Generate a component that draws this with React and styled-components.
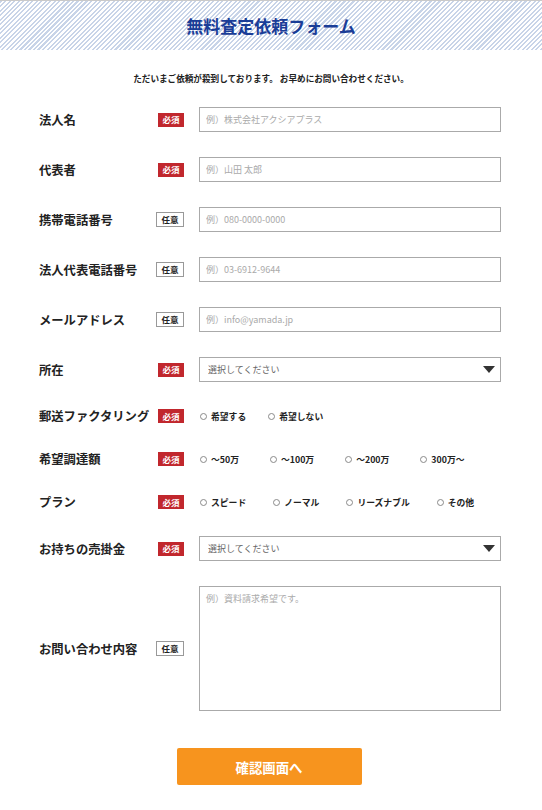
import React from 'react';
import styled, { createGlobalStyle } from 'styled-components';

const fields = [
  { label: '法人名', required: true, type: 'text', placeholder: '例）株式会社アクシアプラス' },
  { label: '代表者', required: true, type: 'text', placeholder: '例）山田 太郎' },
  { label: '携帯電話番号', required: false, type: 'text', placeholder: '例）080-0000-0000' },
  { label: '法人代表電話番号', required: false, type: 'text', placeholder: '例）03-6912-9644' },
  { label: 'メールアドレス', required: false, type: 'text', placeholder: '例）info@yamada.jp' },
  { label: '所在', required: true, type: 'select' },
  { label: '郵送ファクタリング', required: true, type: 'radio', name: 'mail', gap: 21, options: ['希望する', '希望しない'] },
  { label: '希望調達額', required: true, type: 'radio', name: 'amount', gap: 30, options: ['〜50万', '〜100万', '〜200万', '300万〜'] },
  { label: 'プラン', required: true, type: 'radio', name: 'plan', gap: 26, options: ['スピード', 'ノーマル', 'リーズナブル', 'その他'] },
  { label: 'お持ちの売掛金', required: true, type: 'select' },
  { label: 'お問い合わせ内容', required: false, type: 'textarea', placeholder: '例）資料請求希望です。' },
];

const App = function () {
  const renderField = (f) => {
    if (f.type === 'select') {
      return (
        <SelectWrap>
          <Select defaultValue="">
            <option value="">選択してください</option>
          </Select>
        </SelectWrap>
      );
    }
    if (f.type === 'radio') {
      return (
        <RadioGroup>
          {f.options.map((opt, i) => (
            <RadioLabel key={i} $gap={f.gap}>
              <Radio type="radio" name={f.name} />
              {opt}
            </RadioLabel>
          ))}
        </RadioGroup>
      );
    }
    if (f.type === 'textarea') {
      return <TextArea placeholder={f.placeholder} />;
    }
    return <Input type="text" placeholder={f.placeholder} />;
  };

  return (
    <Page>
      <GlobalStyle />
      <Header>
        <Title>無料査定依頼フォーム</Title>
      </Header>
      <Lead>ただいまご依頼が殺到しております。 お早めにお問い合わせください。</Lead>
      <Form onSubmit={(e) => e.preventDefault()}>
        <Rows>
          {fields.map((f, i) => (
            <Row key={i}>
              <LabelCell>
                <Label>{f.label}</Label>
                {f.required ? <Required>必須</Required> : <Optional>任意</Optional>}
              </LabelCell>
              <FieldCell>{renderField(f)}</FieldCell>
            </Row>
          ))}
        </Rows>
        <Submit type="submit">確認画面へ</Submit>
      </Form>
    </Page>
  );
};

export default App;

const GlobalStyle = createGlobalStyle`
  * { box-sizing: border-box; }
  body {
    margin: 0;
    background: #fff;
    color: #222;
    font-family: "Noto Sans CJK JP", "Noto Sans", sans-serif;
  }
`;

const Page = styled.div`
  width: 542px;
  min-height: 810px;
  background: #fff;
`;

const Header = styled.div`
  height: 50px;
  border-top: 1px solid #c9c9c9;
  background: repeating-linear-gradient(135deg, #c8d4e8 0px, #c8d4e8 1.5px, #ffffff 1.5px, #ffffff 3.2px);
  display: flex;
  align-items: center;
  justify-content: center;
`;

const Title = styled.h1`
  margin: 0;
  color: #1a3d97;
  font-size: 17px;
  font-weight: 700;
  line-height: 1;
`;

const Lead = styled.p`
  margin: 22px 0 0;
  text-align: center;
  font-size: 8.6px;
  font-weight: 700;
  line-height: 12px;
  color: #222;
`;

const Form = styled.form`
  padding: 23px 41px 0 39px;
  display: flex;
  flex-direction: column;
  align-items: center;
`;

const Rows = styled.div`
  width: 100%;
  display: flex;
  flex-direction: column;
  gap: 25px;
`;

const Row = styled.div`
  display: flex;
  align-items: center;
`;

const LabelCell = styled.div`
  width: 145px;
  flex: none;
  display: flex;
  align-items: center;
  justify-content: space-between;
`;

const Label = styled.span`
  font-size: 12.3px;
  font-weight: 700;
  color: #222;
  white-space: nowrap;
`;

const Required = styled.span`
  width: 26px;
  height: 14px;
  background: #c1272d;
  color: #fff;
  font-size: 8.5px;
  font-weight: 700;
  display: flex;
  align-items: center;
  justify-content: center;
  line-height: 1;
`;

const Optional = styled.span`
  width: 28px;
  height: 15px;
  background: #fff;
  border: 1px solid #999;
  color: #222;
  font-size: 8.5px;
  font-weight: 700;
  display: flex;
  align-items: center;
  justify-content: center;
  line-height: 1;
`;

const FieldCell = styled.div`
  margin-left: 15px;
  width: 302px;
  flex: none;
`;

const Input = styled.input`
  display: block;
  width: 100%;
  height: 25px;
  border: 1px solid #aaa;
  border-radius: 0;
  padding: 0 6px;
  font-family: inherit;
  font-size: 9px;
  color: #333;
  outline: none;
  &::placeholder { color: #aaa; }
`;

const TextArea = styled.textarea`
  display: block;
  width: 100%;
  height: 125px;
  border: 1px solid #aaa;
  border-radius: 0;
  padding: 5px 6px;
  font-family: inherit;
  font-size: 9px;
  line-height: 14px;
  resize: none;
  outline: none;
  &::placeholder { color: #aaa; }
`;

const SelectWrap = styled.div`
  position: relative;
  &::after {
    content: '';
    position: absolute;
    right: 6px;
    top: 9px;
    border-left: 6px solid transparent;
    border-right: 6px solid transparent;
    border-top: 7px solid #333;
    pointer-events: none;
  }
`;

const Select = styled.select`
  display: block;
  width: 100%;
  height: 25px;
  appearance: none;
  -webkit-appearance: none;
  background: #fff;
  border: 1px solid #aaa;
  border-radius: 0;
  padding: 0 8px;
  font-family: inherit;
  font-size: 9px;
  color: #666;
  outline: none;
`;

const RadioGroup = styled.div`
  height: 18px;
  display: flex;
  align-items: center;
`;

const RadioLabel = styled.label`
  display: flex;
  align-items: center;
  margin-right: ${(p) => p.$gap}px;
  font-size: 8.8px;
  font-weight: 700;
  color: #222;
  white-space: nowrap;
`;

const Radio = styled.input`
  appearance: none;
  -webkit-appearance: none;
  width: 7px;
  height: 7px;
  margin: 0 4px 0 1px;
  border: 1px solid #8a8a8a;
  border-radius: 50%;
  background: #fff;
  &:checked { background: #555; box-shadow: inset 0 0 0 1px #fff; }
`;

const Submit = styled.button`
  margin-top: 37px;
  width: 185px;
  height: 37px;
  border: none;
  border-radius: 2px;
  background: #f7941e;
  color: #fff;
  font-family: inherit;
  font-size: 13.4px;
  font-weight: 700;
  cursor: pointer;
  position: relative;
  left: -1px;
`;
